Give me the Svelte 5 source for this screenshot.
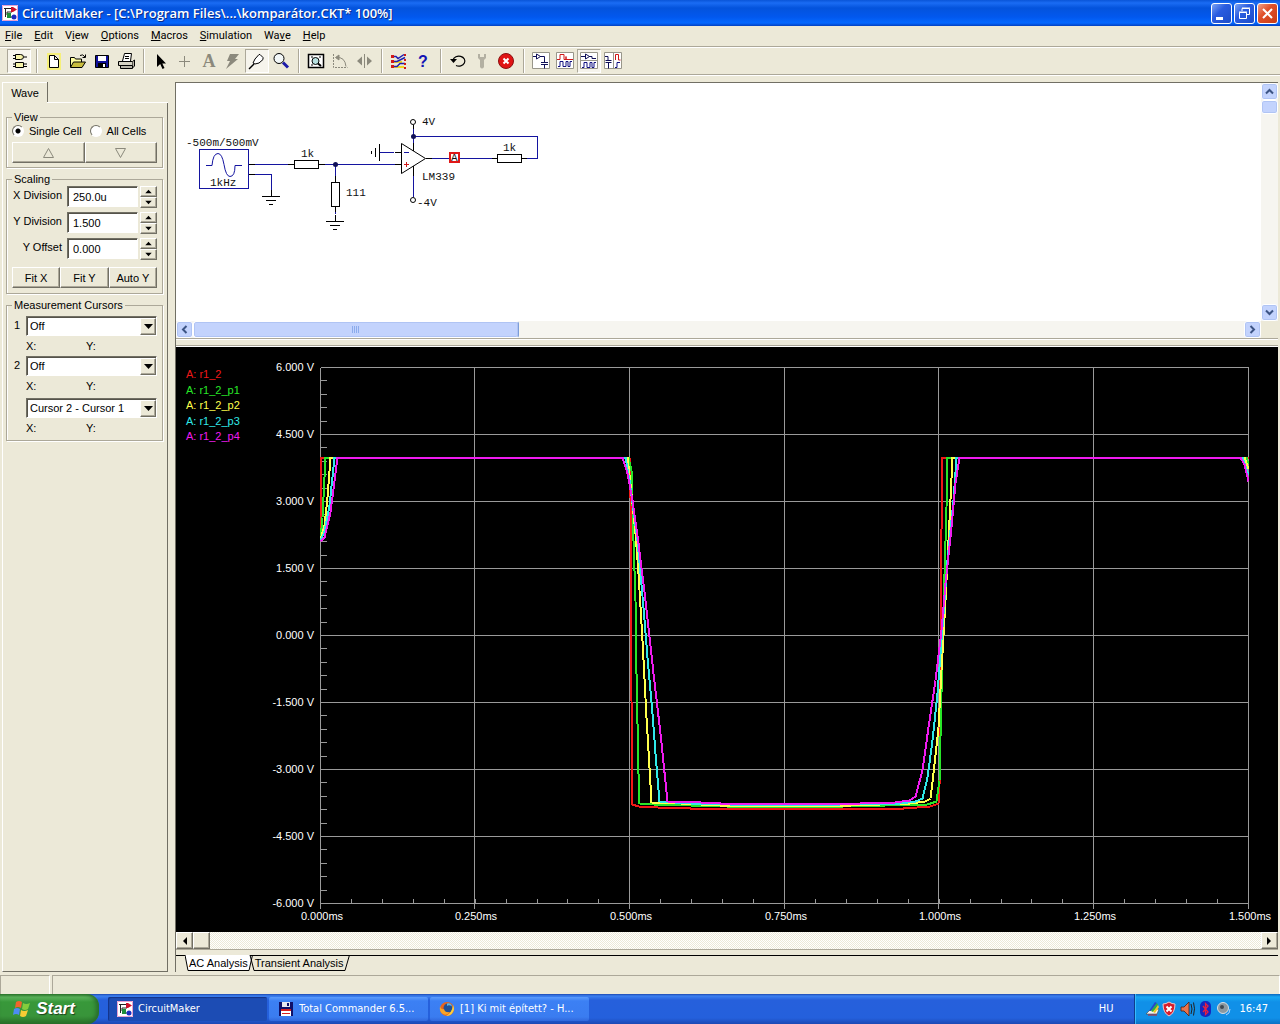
<script>
  const menus = [
    ['', 'F', 'ile'],
    ['', 'E', 'dit'],
    ['V', 'i', 'ew'],
    ['', 'O', 'ptions'],
    ['', 'M', 'acros'],
    ['', 'S', 'imulation'],
    ['Wa', 'v', 'e'],
    ['', 'H', 'elp']
  ];

  const toolGroups = [
    ['parts'],
    ['new', 'open', 'save', 'print'],
    ['arrow', 'wire', 'text', 'delete', 'probe', 'zoom'],
    ['fit', 'rotate', 'mirror'],
    ['digital', 'help'],
    ['reset', 'setup', 'stop'],
    ['win1', 'win2', 'win3', 'win4']
  ];
  const pressed = ['parts', 'probe', 'win3'];

  let cell = $state('single');
  let scaling = $state([
    { label: 'X Division', value: '250.0u' },
    { label: 'Y Division', value: '1.500' },
    { label: 'Y Offset', value: '0.000' }
  ]);

  const cursors = [
    { no: '1', options: ['Off', 'On'] },
    { no: '2', options: ['Off', 'On'] },
    { no: '', options: ['Cursor 2 - Cursor 1', 'Cursor 1 - Cursor 2'] }
  ];

  // plot area: 6 x 8 divisions
  const plotW = 928;
  const plotH = 536;
  const volts = ['6.000', '4.500', '3.000', '1.500', '0.000', '-1.500', '-3.000', '-4.500', '-6.000'];
  const times = ['0.000', '0.250', '0.500', '0.750', '1.000', '1.250', '1.500'];
  const col = (i) => Math.floor((i * plotW) / 6);
  const row = (i) => (i * plotH) / 8;
  const yTicks = Array.from({ length: 40 }, (_, i) => Math.round((i * plotH) / 40));
  const xTicks = Array.from({ length: 30 }, (_, i) => Math.round((i * plotW) / 30));

  const traces = [
    {
      name: 'A: r1_2',
      color: '#f01818',
      points:
        '0,174 1,90 309,90 310,130 310,230 311,333 312,437 318,439 337,440 370,441 583,441 610,439 618,436 619,420 620,300 621,162 622,90 928,90'
    },
    {
      name: 'A: r1_2_p1',
      color: '#28e628',
      points:
        '0,172 2,150 5,90 308,90 311,103 313,173 315,233 316,306 318,406 319,436 333,437 407,439 523,439 607,437 616,434 619,413 621,326 623,240 626,140 627,90 926,90 928,97'
    },
    {
      name: 'A: r1_2_p2',
      color: '#ffff4c',
      points:
        '0,172 4,158 7,130 10,90 307,90 310,116 315,166 318,206 322,273 326,350 329,400 331,435 360,436 400,438 530,438 590,436 605,434 610,431 613,406 618,360 621,303 625,233 629,153 632,90 924,90 928,102'
    },
    {
      name: 'A: r1_2_p3',
      color: '#30e8e8',
      points:
        '0,173 4,164 9,138 14,90 305,90 309,113 317,173 323,240 327,290 332,346 335,386 339,434 370,436 410,437 520,437 580,436 595,434 602,431 607,410 612,373 617,326 621,273 627,193 633,133 636,90 922,90 928,108'
    },
    {
      name: 'A: r1_2_p4',
      color: '#f01cf0',
      points:
        '0,174 4,170 10,145 17,90 302,90 307,106 312,133 318,176 323,216 328,260 333,306 340,366 347,434 380,435 400,436 540,436 575,435 589,433 595,429 602,403 608,360 615,313 621,263 625,216 631,160 635,116 639,90 920,90 924,97 928,114'
    }
  ];

  const tasks = [
    { icon: 'app', title: 'CircuitMaker', active: true },
    { icon: 'floppy', title: 'Total Commander 6.5...', active: false },
    { icon: 'firefox', title: '[1] Ki mit épített? - H...', active: false }
  ];
</script>

{#snippet appIcon()}
  <svg class="icon" width="16" height="16" viewBox="0 0 16 16">
    <rect width="16" height="16" fill="#fff" />
    <path d="M.5.5h15v15H.5z" fill="none" stroke="#e8a0d0" />
    <path d="M2 3.500h8M3.500 3v9M10 7h-5v3M9 12h5" fill="none" stroke="#222" />
    <path d="M5 8h4v5H5z" fill="#1f8f3a" />
    <path d="M9 2h2l4 2.500L11 7H9z" fill="#d0102a" />
    <circle cx="12" cy="12" r="2.500" fill="#1c2cc0" />
  </svg>
{/snippet}

{#snippet arrowHead(dir)}
  <svg width="9" height="7" viewBox="0 0 9 7">
    {#if dir === 'up'}
      <path d="M0 6h9L4.500 1z" />
    {:else}
      <path d="M0 1h9L4.500 6z" />
    {/if}
  </svg>
{/snippet}

{#snippet toolIcon(name)}
  <svg width="20" height="20" viewBox="0 0 20 20" fill="none" stroke="#000">
    {#if name === 'parts'}
      <path d="M6.500 3.500h5q3 0 3 2.500t-3 2.500h-5zM4 4.500h2M4 7.500h2M15 6h3" fill="#f6f3a8" />
      <path d="M6.500 11.500h8v5h-8zM4 13h2M4 15.500h2M15 13h3M15 15.500h3" fill="#f6f3a8" />
    {:else if name === 'new'}
      <path d="M4 3h12v15H4z" stroke="#f6f07a" stroke-width="2" />
      <path d="M5.500 4.500h5l4 4v8h-9zM10.500 4.500v4h4" fill="#fff" />
    {:else if name === 'open'}
      <path d="M2.500 16V6.500h4l1 1.500h6v3" fill="#ffffa0" />
      <path d="M2.500 16.500l3-5.500h12l-3.500 5.500z" fill="#c9bd3e" />
      <path d="M12 4.500q3-2 5 1.500M17.500 3.500v3h-3" />
    {:else if name === 'save'}
      <path d="M3.500 4.500h13v12h-13z" fill="#10109a" />
      <path d="M6 5h8v5H6z" fill="#fff" stroke="none" />
      <path d="M6 12h8v4H6z" fill="#000" stroke="none" />
      <path d="M11 13h2v3h-2z" fill="#fff" stroke="none" />
    {:else if name === 'print'}
      <path d="M6.500 10l2-7.500h7l-1 7.500" fill="#fff" />
      <path d="M9 5.500h4M9 7.500h4" />
      <path d="M2.500 10.500h14v4h-14z" fill="#d6d3c4" />
      <path d="M4.500 14.500h12v3h-12zM16.500 10.500l2-1.500v6l-2 2" fill="#b8b5a8" />
    {:else if name === 'arrow'}
      <path d="M6 3v13l3.200-3 2.300 5 2-1-2.200-4.500H15z" fill="#000" stroke="none" />
    {:else if name === 'wire'}
      <path d="M9.500 5v11M4 10.500h11" stroke="#8b897c" />
    {:else if name === 'text'}
      <text x="10" y="16" text-anchor="middle" fill="#8b897c" stroke="none" font-size="18" font-family="Liberation Serif, serif" font-weight="bold">A</text>
    {:else if name === 'delete'}
      <path d="M7 3h9l-4 5h3L3 18l4-8H4z" fill="#8b897c" stroke="none" />
    {:else if name === 'probe'}
      <path d="M8 8l4-4.500h1l3 3v2L12 12l-4 1-2-1z" fill="#fff" />
      <path d="M7 13l-5 5" stroke-width="1.500" />
    {:else if name === 'zoom'}
      <circle cx="8" cy="7.500" r="5" fill="#f2f7f7" />
      <path d="M12 11.500l5 5" stroke="#1c1ca8" stroke-width="3" />
    {:else if name === 'fit'}
      <path d="M2.500 3.500h15v13h-15z" fill="#fff" stroke-width="1.500" />
      <path d="M5 6h2M13 6h2M5 14h2" />
      <circle cx="9.500" cy="10" r="3.500" fill="#b8e0e0" />
      <path d="M12 12.500l3 2.500" stroke-width="2" />
    {:else if name === 'rotate'}
      <g stroke="#8b897c">
        <path d="M3.500 3v13.500h14" stroke-dasharray="2 1" />
        <path d="M6 6.500q9-1 10 9" />
        <path d="M9 4v5L5.500 6.500z" fill="#8b897c" />
      </g>
    {:else if name === 'mirror'}
      <path d="M10.500 3v14" stroke="#8b897c" />
      <path d="M8 5.500v9L3 10zM13 5.500v9l5-4.500z" fill="#8b897c" stroke="none" />
    {:else if name === 'digital'}
      <path d="M4 11h9M5 16h10" stroke="#f0d820" stroke-width="2" />
      <path d="M4 5.500h3l2 2 6-4M4 10.500h4l8-4M4 15.500h4l3-3h5" stroke="#2020b0" stroke-width="1.500" />
      <path d="M2 4h3v3H2zM2 9h3v3H2zM2 14h3v3H2zM15 3h2v2h-2zM15 8h2v2h-2zM15 12h2v2h-2zM15 16h2v2h-2z" fill="#d01818" stroke="none" />
    {:else if name === 'help'}
      <text x="10" y="16" text-anchor="middle" fill="#1414b4" stroke="none" font-size="16" font-family="Liberation Sans, sans-serif" font-weight="bold">?</text>
    {:else if name === 'reset'}
      <path d="M5 9a6 5 0 1 1 3 5.500" stroke-width="1.200" />
      <path d="M2 8h7l-3.500 4z" fill="#000" stroke="none" />
    {:else if name === 'setup'}
      <path d="M6 3v4l2 2v7q2 3 4 0V9l2-2V3l-2 0v3h-4V3z" fill="#b3b0a2" stroke="none" />
    {:else if name === 'stop'}
      <circle cx="10" cy="10" r="7.500" fill="#e01414" stroke="#8c1010" />
      <path d="M7.500 7.500l5 5M12.500 7.500l-5 5" stroke="#fff" stroke-width="2" />
    {:else}
      <path d="M1.500 1.500h17v16h-17z" fill="#fff" stroke="#98968a" />
      {#if name === 'win1'}
        <path d="M2 5.500h3M5.500 3v5l4-2.500zM9 5.500h4.500v6M10 11.500h7M10 13.500h7M13.500 13.500v4" stroke="#101058" />
      {:else if name === 'win2'}
        <path d="M2 8.500h3v-5h4v5h2v-3h0v3h7" stroke="#d01818" />
        <path d="M3 15.500h2v-5h3v5h3v-5h2v5h2v-5h2" stroke="#101080" />
      {:else if name === 'win3'}
        <path d="M2 9.500h16" stroke="#98968a" />
        <path d="M2 5.500h4M6.500 3v5l4-2.500zM10 5.500h3v2h4" stroke="#101058" />
        <path d="M3 16.500h2v-5h3v5h3v-5h2v5h2v-5h2" stroke="#101080" />
      {:else}
        <path d="M10.500 2v16" stroke="#98968a" />
        <path d="M2 5.500h3v4M2.500 9.500h6M2.500 11.500h6M5.500 11.500v6" stroke="#101058" />
        <path d="M12.500 9V3.500h3V9h2" stroke="#d01818" />
        <path d="M12 16.500h2v-5h3" stroke="#101080" />
      {/if}
    {/if}
  </svg>
{/snippet}

<div class="desktop">
  <header class="titlebar">
    {@render appIcon()}
    <h1>CircuitMaker - [C:\Program Files\...\komparátor.CKT* 100%]</h1>
    <button class="winbtn" aria-label="Minimize">
      <svg width="19" height="19"><path d="M4 13h7v3H4z" fill="#fff" /></svg>
    </button>
    <button class="winbtn" aria-label="Restore">
      <svg width="19" height="19" fill="none" stroke="#fff">
        <path d="M7 7V4.500h7.500v6H12M7 4h8" />
        <path d="M4.500 8.500h7v6h-7zM4 8h8" />
      </svg>
    </button>
    <button class="winbtn close" aria-label="Close">
      <svg width="19" height="19"><path d="M5 5l9 9M14 5l-9 9" stroke="#fff" stroke-width="2" /></svg>
    </button>
  </header>

  <nav class="menubar">
    {#each menus as [before, key, after]}
      <button>{before}<u>{key}</u>{after}</button>
    {/each}
  </nav>

  <div class="toolbar">
    {#each toolGroups as group, i}
      {#if i > 0}<span class="sep"></span>{/if}
      {#each group as name}
        <button class="tool" class:pressed={pressed.includes(name)} aria-label={name}>
          {@render toolIcon(name)}
        </button>
      {/each}
    {/each}
  </div>

  <main>
    <aside>
      <div class="tabrow"><button class="tab">Wave</button><span></span></div>
      <div class="panel">
        <fieldset class="view">
          <legend>View</legend>
          <div class="radios">
            <label><input type="radio" value="single" bind:group={cell} />Single Cell</label>
            <label><input type="radio" value="all" bind:group={cell} />All Cells</label>
          </div>
          <div class="buttons">
            <button aria-label="Previous cell">
              <svg width="11" height="10"><path d="M.5 9.500h10L5.500.5z" fill="none" stroke="#8b897c" /></svg>
            </button>
            <button aria-label="Next cell">
              <svg width="11" height="10"><path d="M.5.5h10l-5 9z" fill="none" stroke="#8b897c" /></svg>
            </button>
          </div>
        </fieldset>

        <fieldset class="scaling">
          <legend>Scaling</legend>
          {#each scaling as field, i}
            <div class="field">
              <label for="scale{i}">{field.label}</label>
              <input id="scale{i}" type="text" bind:value={field.value} />
              <div class="spin">
                <button aria-label="Increase">{@render arrowHead('up')}</button>
                <button aria-label="Decrease">{@render arrowHead('down')}</button>
              </div>
            </div>
          {/each}
          <div class="buttons fits">
            <button>Fit X</button>
            <button>Fit Y</button>
            <button>Auto Y</button>
          </div>
        </fieldset>

        <fieldset class="cursors">
          <legend>Measurement Cursors</legend>
          {#each cursors as cursor, i}
            <div class="cursor">
              <label for="cursor{i}">{cursor.no}</label>
              <div class="combo">
                <select id="cursor{i}" aria-label="Cursor {cursor.no || 'difference'}">
                  {#each cursor.options as option}<option>{option}</option>{/each}
                </select>
                <span class="drop">{@render arrowHead('down')}</span>
              </div>
              <p><span>X:</span><span>Y:</span></p>
            </div>
          {/each}
        </fieldset>
      </div>
    </aside>

    <section class="work">
      <div class="schematic">
        <div class="canvas">
          <svg width="380" height="160" viewBox="0 0 380 160" fill="none" shape-rendering="crispEdges">
            <g stroke="#1414a0">
              <path d="M23.500 66.500h49v39h-49zM73 81.500h39M79 91.500h16.500v16M143 81.500h78M159.500 81v18M211 69.500h-7M256 75.500h17M284 75.500h38M345 75.500h16.500v-22H237.500M237.500 42v22M237.500 90v24M159.500 131v-2" />
              <path d="M30 82.500h6q1-12 6-12 4 0 6 11 2 12 6 12 5 0 5-11h7" shape-rendering="auto" />
              <path d="M204 69.500h14" />
            </g>
            <g stroke="#000">
              <path d="M73 81.500h6M73 91.500h6M86 113.500h18M90 117.500h10M93 121.500h4M95.500 107v6" />
              <path d="M112 81.500h6M118.500 77.500h24v8h-24zM143 81.500h6" />
              <path d="M159.500 93v6M155.500 99.500h8v24h-8zM159.500 124v5M159.500 132v6M150 138.500h18M154 142.500h10M157 146.500h4" />
              <path d="M203.500 61v17M199.500 65v9M195.500 68v3M219 69.500h6M219 81.500h6" />
              <path d="M225.500 60.500v30l24-15z" fill="#fff" shape-rendering="auto" />
              <path d="M250 75.500h6M316 75.500h5M321.500 71.500h24v8h-24zM346 75.500h5M237.500 60v8M237.500 83v10M237.500 42v4" />
            </g>
            <path d="M228 69.500h5" stroke="#1414a0" />
            <path d="M228 81.500h5M230.500 79v5" stroke="#d01818" />
            <g shape-rendering="auto">
              <circle cx="159.500" cy="81.500" r="2.500" fill="#101058" />
              <circle cx="237.500" cy="53.500" r="2.500" fill="#101058" />
              <circle cx="237" cy="39" r="2.500" fill="#fff" stroke="#000" />
              <circle cx="237" cy="117" r="2.500" fill="#fff" stroke="#000" />
            </g>
            <path d="M274 70h9v9h-9z" fill="#fff" stroke="#e01818" stroke-width="2" />
            <g class="parts-text">
              <text x="10" y="63">-500m/500mV</text>
              <text x="34" y="103">1kHz</text>
              <text x="125" y="74">1k</text>
              <text x="170" y="113">111</text>
              <text x="246" y="42">4V</text>
              <text x="246" y="97">LM339</text>
              <text x="241" y="123">-4V</text>
              <text x="275" y="78">A</text>
              <text x="327" y="68">1k</text>
            </g>
          </svg>
        </div>
        <div class="vscroll">
          <button class="xp" aria-label="Scroll up"><svg width="9" height="7"><path d="M1 5.500L4.500 2 8 5.500" /></svg></button>
          <span class="thumb"></span>
          <button class="xp end" aria-label="Scroll down"><svg width="9" height="7"><path d="M1 1.500L4.500 5 8 1.500" /></svg></button>
        </div>
        <div class="hscroll">
          <button class="xp" aria-label="Scroll left"><svg width="7" height="9"><path d="M5.500 1L2 4.500 5.500 8" /></svg></button>
          <span class="thumb"><i></i><i></i><i></i><i></i></span>
          <button class="xp end" aria-label="Scroll right"><svg width="7" height="9"><path d="M1.500 1L5 4.500 1.500 8" /></svg></button>
        </div>
      </div>
      <div class="splitter"></div>

      <div class="scope">
        <svg viewBox="0 0 1102 585" preserveAspectRatio="xMinYMin meet">
          {#each traces as trace, i}
            <text x="10" y={31 + Math.round(i * 15.5)} fill={trace.color}>{trace.name}</text>
          {/each}
          {#each volts as v, i}
            <text x="138" y={24 + row(i)} text-anchor="end" fill="#fff">{v} V</text>
          {/each}
          {#each times as t, i}
            <text x={146 + col(i)} y="573" text-anchor="middle" fill="#fff">{t}ms</text>
          {/each}
          <g transform="translate(144.5 20.5)" fill="none" shape-rendering="crispEdges">
            <g stroke="#9a9a9a">
              {#each volts as _, i}<path d="M0 {row(i)}h{plotW}" />{/each}
              {#each times as _, i}<path d="M{col(i)} 0v{plotH + 5}" />{/each}
              {#each yTicks as y}<path d="M0 {y}h6" />{/each}
              {#each xTicks as x}<path d="M{x} {plotH - 5}v5" />{/each}
            </g>
            {#each traces as trace}
              <polyline points={trace.points} stroke={trace.color} stroke-width="2" />
            {/each}
          </g>
        </svg>
      </div>

      <div class="classic-scroll">
        <button aria-label="Scroll left"><svg width="5" height="8"><path d="M5 0v8L1 4z" /></svg></button>
        <span class="knob"></span>
        <button class="end" aria-label="Scroll right"><svg width="5" height="8"><path d="M0 0v8l4-4z" /></svg></button>
      </div>
      <div class="sheets">
        <span class="rule lead"></span>
        <svg width="4" height="16"><path d="M0 0l3 15h1V0z" fill="#fff" /><path d="M0 0l3 15.500h1" fill="none" stroke="#000" /></svg>
        <button class="sheet current">AC Analysis</button>
        <svg width="7" height="16"><path d="M0 0h4L1 15H0z" fill="#fff" /><path d="M0 15.500h1L4.500 0M2 0l4 15.500h1M2 .5h5" fill="none" stroke="#000" /></svg>
        <button class="sheet">Transient Analysis</button>
        <svg width="6" height="16"><path d="M0 15.500h1L5.500 0M0 .5h6" fill="none" stroke="#000" /></svg>
        <span class="rule"></span>
      </div>
    </section>
  </main>

  <div class="status"><span></span><span></span></div>

  <footer class="taskbar">
    <button class="start">
      <svg width="20" height="20" viewBox="0 0 20 20">
        <path d="M4 3q3-2 6 0L9 9Q6 7 3 9z" fill="#f0642c" />
        <path d="M11 4q3 2 7 0l-2 6q-3 2-6 0z" fill="#84cc3c" />
        <path d="M2 10q3-2 6 0l-1 6q-3-2-6 0z" fill="#4c8cf4" />
        <path d="M9 11q3 2 7 0l-2 6q-3 2-6 0z" fill="#f8cc34" />
      </svg>
      Start
    </button>
    <div class="tasks">
      {#each tasks as task}
        <button class="task" class:active={task.active}>
          {#if task.icon === 'app'}
            {@render appIcon()}
          {:else if task.icon === 'floppy'}
            <svg width="16" height="16" viewBox="0 0 16 16">
              <path d="M1 1h14v14H1z" fill="#101068" />
              <path d="M4 1h8v5H4z" fill="#e8e8f0" /><path d="M9 2h2v3H9z" fill="#101068" />
              <path d="M3 8h10v7H3z" fill="#fff" /><path d="M3 8h10v2H3zM4 12h8v1H4z" fill="#d82020" />
            </svg>
          {:else}
            <svg width="16" height="16" viewBox="0 0 16 16">
              <circle cx="8" cy="8" r="7" fill="#e8641c" />
              <circle cx="9" cy="7" r="4.500" fill="#205098" />
              <path d="M8 2.500q4-1 5 3-3-2-5-.5z" fill="#58b8e8" />
              <path d="M1 5q1 4 4 3 1 4 6 3-3 4-7 2Q0 11 1 5z" fill="#f8a428" />
              <path d="M14 4q2 4 0 7-2 4-7 4 6-3 7-11z" fill="#f8d040" />
            </svg>
          {/if}
          <span>{task.title}</span>
        </button>
      {/each}
    </div>
    <button class="lang">HU</button>
    <div class="tray">
      <svg width="86" height="16" viewBox="0 0 86 16">
        <path d="M1 13l4-4 9-1-2 5z" fill="#f4f4f4" stroke="#444" stroke-width=".6" />
        <path d="M4 10l6-9 2 1-6 8z" fill="#2848c8" /><path d="M6 10l6-8 1 2-5 7z" fill="#30b040" /><path d="M8 11l5-7 1 2-4 6z" fill="#f0c820" />
        <path d="M3 14h9" stroke="#d02020" />
        <path d="M24 1q3 2 6 2 0 9-6 12-6-3-6-12 3 0 6-2z" fill="#d81c2c" stroke="#f0c8c8" />
        <path d="M21.500 5.500l5 5M26.500 5.500l-5 5" stroke="#fff" stroke-width="2" />
        <path d="M36 6h3l5-5v14l-5-5h-3z" fill="#e8744c" stroke="#4c1c10" stroke-width=".8" />
        <path d="M46 3q2 5 0 10M48.500 1.500q2 6 0 13" fill="none" stroke="#222" />
        <rect x="55" y="0" width="11" height="16" rx="5" fill="#1428c0" />
        <path d="M58 5l5 6-2.500 2.500v-11L63 5l-5 6" fill="none" stroke="#e82040" stroke-width="1.300" />
        <circle cx="78" cy="7" r="5.500" fill="#8c98a0" stroke="#d8e0e4" />
        <circle cx="77" cy="6" r="2" fill="#404850" />
        <path d="M81 14q4-1 4-6" fill="none" stroke="#b0d0ff" />
      </svg>
      <time>16:47</time>
    </div>
  </footer>
</div>

<style>
  :global(body) {
    margin: 0;
    background: #ece9d8;
  }

  .desktop {
    --face: #ece9d8;
    --shade: #aca899;
    --dark: #716f64;
    display: flex;
    flex-direction: column;
    min-height: 100vh;
    background: var(--face);
    color: #000;
    font: 11px/14px 'Liberation Sans', Arial, sans-serif;
  }

  button,
  input,
  select {
    margin: 0;
    font: inherit;
    color: inherit;
  }

  button {
    display: flex;
    align-items: center;
    justify-content: center;
    padding: 0;
    border: 0;
    background: none;
  }

  svg {
    display: block;
    flex: none;
  }

  /* title bar */
  .titlebar {
    display: flex;
    align-items: center;
    gap: 2px;
    height: 26px;
    padding: 0 2px;
    background: linear-gradient(#0a55d8, #1a6cf4 3px, #0453dc 8px, #0258ee 17px, #0468ff 23px, #0340c0);
    color: #fff;
  }

  h1 {
    flex: 1;
    margin: 0 0 0 2px;
    font: 600 13px/20px 'Open Sans', 'Noto Sans', sans-serif;
    text-shadow: 1px 1px #0c2c88;
  }

  .winbtn {
    width: 21px;
    height: 21px;
    border: 1px solid #fff;
    border-radius: 3px;
    background: linear-gradient(135deg, #7ca4f4, #2a5ce0 40%, #1c4cc8);
    &.close {
      background: linear-gradient(135deg, #f0a088, #e0502a 40%, #c83c14);
    }
  }

  .menubar {
    display: flex;
    gap: 12px;
    height: 20px;
    padding: 0 5px;
    border-bottom: 1px solid var(--shade);
    & button {
      font: 11px/18px Roboto, 'DejaVu Sans Condensed', sans-serif;
    }
  }

  .toolbar {
    display: flex;
    align-items: center;
    height: 26px;
    padding-left: 7px;
    border-top: 1px solid #fff;
    border-bottom: 1px solid var(--shade);
    box-shadow: 0 1px #fff;
  }

  .tool {
    box-sizing: border-box;
    width: 24px;
    height: 24px;
    border: 1px solid transparent;
    &.pressed {
      border-color: var(--shade) #fff #fff var(--shade);
      background: #f6f4ec;
    }
  }

  .sep {
    width: 1px;
    height: 24px;
    margin: 0 5px;
    background: var(--shade);
    box-shadow: 1px 0 #fff;
  }

  main {
    display: flex;
    flex: 1;
    margin-top: 7px;
    padding-right: 2px;
  }

  /* side panel */
  aside {
    display: flex;
    flex-direction: column;
    width: 168px;
    margin-right: 7px;
  }

  .tabrow {
    display: flex;
    height: 21px;
    padding-left: 2px;
    & span {
      flex: 1;
      border-bottom: 1px solid #fff;
    }
  }

  .tab {
    width: 45px;
    border: 1px solid #fff;
    border-width: 1px 0 0 1px;
    box-shadow: 1px 0 var(--dark);
  }

  .panel {
    display: flex;
    flex: 1;
    flex-direction: column;
    padding: 7px 4px 0 3px;
    margin-left: 2px;
    border: 1px solid var(--dark);
    border-top: 0;
    border-left-color: #fff;
  }

  fieldset {
    display: flex;
    flex-direction: column;
    min-width: 0;
    margin: 0 0 4px;
    padding: 0 5px 5px;
    border: 1px solid var(--shade);
    box-shadow: inset 1px 0 #fff, 1px 1px #fff;
  }

  .view {
    padding-bottom: 4px;
  }

  legend {
    padding: 0 2px;
    line-height: 14px;
  }

  .radios {
    display: flex;
    gap: 8px;
    height: 18px;
    & label {
      display: flex;
      align-items: center;
      height: 14px;
      gap: 5px;
    }
    & input {
      appearance: none;
      width: 12px;
      height: 12px;
      border: 1px solid;
      border-color: var(--dark) #fff #fff var(--dark);
      border-radius: 50%;
      background: #fff;
    }
    & input:checked {
      background: radial-gradient(circle, #000 2px, #fff 3px);
    }
  }

  .buttons {
    display: flex;
    & button {
      flex: 1;
    }
  }

  .buttons button,
  .spin button,
  .drop,
  .classic-scroll button,
  .knob {
    box-sizing: border-box;
    height: 21px;
    border: 1px solid;
    border-color: #fff var(--dark) var(--dark) #fff;
    background: var(--face);
    box-shadow: inset -1px -1px var(--shade);
  }

  .field {
    display: flex;
    height: 21px;
    margin-bottom: 5px;
    & label {
      flex: 1;
      padding-right: 5px;
      line-height: 18px;
      text-align: right;
    }
    & input {
      box-sizing: border-box;
      width: 71px;
      padding: 0 5px;
      margin-right: 2px;
    }
  }

  .field input,
  .combo {
    border: 1px solid;
    border-color: var(--dark) #fff #fff var(--dark);
    background: #fff;
    box-shadow: inset 1px 1px #55534a;
  }

  .fits {
    margin-top: 3px;
  }

  .spin {
    width: 17px;
    & button {
      width: 17px;
      height: 11px;
    }
    & svg {
      width: 7px;
      height: 5px;
    }
  }

  .cursors {
    padding-top: 4px;
    padding-bottom: 2px;
  }

  .cursor {
    display: grid;
    grid-template-columns: 14px 1fr;
    margin-bottom: 3px;
    & label {
      line-height: 19px;
      padding-left: 2px;
    }
    & p {
      display: flex;
      grid-column: 2;
      margin: 2px 0 0;
      height: 15px;
      line-height: 16px;
    }
    & p span {
      width: 60px;
    }
    &:last-child {
      margin-top: 2px;
    }
  }

  .combo {
    display: flex;
    height: 18px;
    & select {
      flex: 1;
      width: 0;
      padding: 0 3px;
      border: 0;
      background: none;
      appearance: none;
    }
  }

  .drop {
    display: flex;
    align-items: center;
    justify-content: center;
    width: 16px;
    height: 17px;
    margin-top: 1px;
  }

  /* schematic pane */
  .work {
    display: flex;
    flex: 1;
    flex-direction: column;
    min-width: 0;
    border-top: 1px solid var(--dark);
    border-left: 1px solid var(--dark);
  }

  .schematic {
    display: grid;
    grid-template: 1fr 17px / 1fr 17px;
    height: 255px;
  }

  .canvas {
    overflow: hidden;
    background: #fff;
  }

  .parts-text text {
    font: 11px 'Liberation Mono', 'Courier New', monospace;
    fill: #111;
  }

  .vscroll,
  .hscroll {
    display: flex;
    background: #f6f5f0;
  }

  .vscroll {
    flex-direction: column;
    & .thumb {
      height: 14px;
    }
  }

  .hscroll .thumb {
    display: flex;
    align-items: center;
    justify-content: center;
    gap: 1px;
    width: 30%;
  }

  .thumb,
  .xp {
    box-sizing: border-box;
    border: 1px solid #fff;
    border-radius: 3px;
    background: #c3d3fd;
    box-shadow: inset 0 0 0 1px #b0c4f4;
  }

  .hscroll .thumb {
    border-right-color: #7c9cd8;
  }

  .thumb i {
    width: 1px;
    height: 7px;
    background: #8cacec;
  }

  .xp {
    width: 17px;
    height: 17px;
    flex: none;
    & path {
      fill: none;
      stroke: #3c5484;
      stroke-width: 2;
    }
  }

  .end {
    margin-left: auto;
  }

  .vscroll .end {
    margin: auto 0 0;
  }

  .splitter {
    height: 6px;
    margin-bottom: 1px;
    border-top: 1px solid var(--shade);
    border-bottom: 1px solid var(--shade);
    box-shadow: inset 0 1px #fff, 0 1px #fff;
  }

  .scope {
    flex: 1;
    background: #000;
    & svg {
      width: 100%;
    }
    & text {
      font: 11px 'Liberation Sans', Arial, sans-serif;
    }
  }

  .classic-scroll {
    display: flex;
    height: 17px;
    border-bottom: 1px solid var(--shade);
    background: repeating-conic-gradient(#fff 0 25%, #ece9d8 0 50%) 0 0 / 2px 2px;
    & button,
    & .knob {
      width: 17px;
      height: 17px;
    }
  }

  .sheets {
    display: flex;
    height: 17px;
    padding-top: 5px;
  }

  .sheet {
    height: 16px;
    border-top: 1px solid #000;
    border-bottom: 1px solid #000;
    box-sizing: border-box;
    &.current {
      border-top-color: #fff;
      background: #fff;
    }
  }

  .rule {
    flex: 1;
    border-top: 1px solid #000;
    &.lead {
      flex: 0 0 9px;
    }
  }

  .status {
    display: flex;
    gap: 2px;
    height: 19px;
    margin-top: 3px;
    & span {
      border-top: 1px solid var(--shade);
      border-left: 1px solid var(--shade);
      border-right: 1px solid #fff;
      width: 48px;
    }
    & span + span {
      flex: 1;
    }
  }

  /* taskbar */
  .taskbar {
    display: flex;
    height: 30px;
    background: linear-gradient(#1c48b0, #3c80f0 2px, #2660dc 6px, #2460dc 24px, #1c48b4);
    color: #fff;
    font: 11px/14px 'DejaVu Sans Condensed', 'DejaVu Sans', sans-serif;
  }

  .start {
    gap: 4px;
    width: 99px;
    padding-right: 12px;
    border-radius: 0 12px 12px 0;
    background: linear-gradient(#2c7c2c, #5cb45c 3px, #38983a 8px, #38943a 22px, #287028);
    box-shadow: inset -3px 0 4px #286c2c;
    font: italic bold 17px 'Liberation Sans', Arial, sans-serif;
    text-shadow: 1px 1px 1px #1c401c;
  }

  .tasks {
    display: flex;
    flex: 1;
    gap: 2px;
    min-width: 0;
    padding: 3px 0 3px 9px;
  }

  .task {
    flex: 0 1 159px;
    box-sizing: border-box;
    justify-content: flex-start;
    gap: 5px;
    min-width: 0;
    padding: 0 0 0 9px;
    border-radius: 2px;
    background: linear-gradient(#5c9cfc, #3c80f4 4px, #3a7cf0 20px, #3068dc);
    &.active {
      background: #1c4cb4;
      box-shadow: inset 1px 1px 1px #143488;
    }
    & span {
      overflow: hidden;
      white-space: nowrap;
    }
  }

  .lang {
    margin-right: 21px;
  }

  .tray {
    display: flex;
    align-items: center;
    gap: 8px;
    padding: 0 12px 0 10px;
    border-left: 1px solid #103c8c;
    background: linear-gradient(#0c68c0, #18a8f4 3px, #1090e8 8px, #1090e8 24px, #0c70c4);
    box-shadow: inset 1px 0 #38bcfc;
  }
</style>
